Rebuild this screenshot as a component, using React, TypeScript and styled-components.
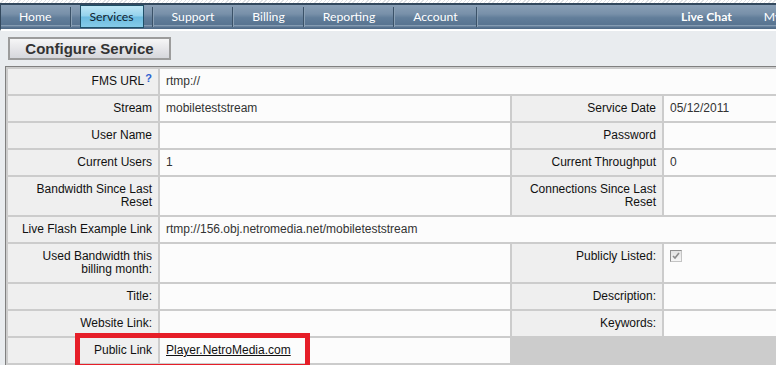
import styled, { createGlobalStyle } from "styled-components";

const GlobalStyle = createGlobalStyle`
  html, body {
    margin: 0;
    padding: 0;
    overflow: hidden;
    background: #e9ecef;
  }
`;

// page frame
const Page = styled.div`
  position: relative;
  width: 844px;
  font-family: "Liberation Sans", Arial, sans-serif;
`;

const TopStrip = styled.div`
  height: 3px;
  background: repeating-linear-gradient(
    135deg,
    #ffffff 0px,
    #ffffff 2px,
    #dfe2e5 2px,
    #dfe2e5 3px
  );
`;

const NavBar = styled.nav`
  display: flex;
  align-items: center;
  height: 25px;
  border: 1px solid #33495e;
  border-right: none;
  background: linear-gradient(
    to bottom,
    #8ba1b7 0%,
    #7890a9 40%,
    #627e9a 55%,
    #587491 82%,
    #849bb1 86%,
    #5a7592 92%,
    #4d6884 100%
  );
  font-family: Lato, "Open Sans", sans-serif;
  font-size: 12.2px;
  border-bottom: 2px solid #ffffff;
  box-shadow: 0 1px 0 #33495e inset;
`;

const NavGroup = styled.div`
  display: flex;
  align-items: center;
  height: 100%;
`;

const RightGroup = styled(NavGroup)`
  margin-left: auto;
`;

const NavItem = styled.a<{ $active?: boolean; $bold?: boolean }>`
  display: flex;
  align-items: center;
  height: 23px;
  box-sizing: border-box;
  margin: 0 8px;
  padding: 0 9px;
  color: ${(p) => (p.$active ? "#10222e" : "#ffffff")};
  font-weight: ${(p) => (p.$bold ? 700 : 400)};
  text-decoration: none;
  white-space: nowrap;
  border: 1px solid ${(p) => (p.$active ? "#1f5068" : "transparent")};
  background: ${(p) =>
    p.$active
      ? "linear-gradient(to bottom, #bde6f5 0%, #94d2ec 48%, #6bbbdf 52%, #86cbe9 100%)"
      : "none"};
`;

const RightItem = styled(NavItem)`
  margin: 0;
  padding: 0 15px;
`;

const Separator = styled.span`
  width: 1px;
  height: 20px;
  background: #3b5268;
  border-right: 1px solid #8aa0b5;
`;

// content
const Content = styled.div`
  padding: 6px 0 0 5px;
`;

const TitleButton = styled.div`
  display: inline-flex;
  align-items: center;
  justify-content: center;
  box-sizing: border-box;
  width: 163px;
  height: 23px;
  margin-left: 3px;
  margin-bottom: 6px;
  border: 2px solid #9c9c9c;
  background: linear-gradient(to bottom, #f6f6f7 0%, #e6e6e9 50%, #d6d7dc 100%);
  color: #333333;
  font-size: 15px;
  font-weight: 700;
`;

const TableWrap = styled.div`
  position: relative;
`;

const InfoTable = styled.table`
  border: 1px solid #808080;
  border-spacing: 2px;
  background: #cccccc;
  font-size: 12px;
  table-layout: fixed;
`;

const Label = styled.td`
  width: 138px;
  padding: 6px 6px 6px;
  line-height: 13px;
  text-align: right;
  vertical-align: top;
  background: #efefef;
  color: #111111;
`;

const Value = styled.td<{ $w?: number }>`
  ${(p) => (p.$w ? `width: ${p.$w}px;` : "")}
  padding: 6px 6px 6px;
  line-height: 13px;
  vertical-align: top;
  background: #fcfcfc;
  color: #333333;
`;

const Blank = styled.td`
  background: transparent;
`;

const Help = styled.span`
  position: relative;
  top: -3px;
  margin-left: 1px;
  color: #2b5fcf;
  font-size: 11px;
  font-weight: 700;
`;

const PublicLink = styled.a`
  color: #111111;
  text-decoration: underline;
`;

const CheckBox = styled.span`
  display: inline-flex;
  align-items: center;
  justify-content: center;
  width: 12px;
  height: 12px;
  box-sizing: border-box;
  border: 1px solid #8f8f8f;
  border-right-color: #c4c4c4;
  border-bottom-color: #c4c4c4;
  background: linear-gradient(to bottom, #e2e2e2, #f6f6f6);
`;

const Highlight = styled.div`
  position: absolute;
  left: 70px;
  top: 267px;
  width: 235px;
  height: 36px;
  box-sizing: border-box;
  border: 5px solid #e61e28;
  pointer-events: none;
`;

const navLeft = ["Home", "Services", "Support", "Billing", "Reporting", "Account"];

export default function App() {
  return (
    <>
      <GlobalStyle />
      <Page>
        <TopStrip />
        <NavBar>
          <NavGroup>
            {navLeft.map((item, i) => (
              <NavGroup key={item}>
                {i > 0 && <Separator />}
                <NavItem $active={item === "Services"}>{item}</NavItem>
              </NavGroup>
            ))}
            <Separator />
          </NavGroup>
          <RightGroup>
            <RightItem $bold>Live Chat</RightItem>
            <RightItem>My Account</RightItem>
          </RightGroup>
        </NavBar>

        <Content>
          <TitleButton>Configure Service</TitleButton>
          <TableWrap>
            <InfoTable>
              <tbody>
                <tr>
                  <Label>
                    FMS URL<Help>?</Help>
                  </Label>
                  <Value colSpan={3}>rtmp://</Value>
                </tr>
                <tr>
                  <Label>Stream</Label>
                  <Value $w={338}>mobileteststream</Value>
                  <Label>Service Date</Label>
                  <Value $w={164}>05/12/2011</Value>
                </tr>
                <tr>
                  <Label>User Name</Label>
                  <Value />
                  <Label>Password</Label>
                  <Value />
                </tr>
                <tr>
                  <Label>Current Users</Label>
                  <Value>1</Value>
                  <Label>Current Throughput</Label>
                  <Value>0</Value>
                </tr>
                <tr>
                  <Label>Bandwidth Since Last Reset</Label>
                  <Value />
                  <Label>Connections Since Last Reset</Label>
                  <Value />
                </tr>
                <tr>
                  <Label>Live Flash Example Link</Label>
                  <Value colSpan={3}>rtmp://156.obj.netromedia.net/mobileteststream</Value>
                </tr>
                <tr>
                  <Label>Used Bandwidth this billing month:</Label>
                  <Value />
                  <Label>Publicly Listed:</Label>
                  <Value>
                    <CheckBox>
                      <svg width="8" height="8" viewBox="0 0 8 8">
                        <polyline
                          points="1,4 3,6 7,1"
                          fill="none"
                          stroke="#8c8c8c"
                          strokeWidth="1.6"
                        />
                      </svg>
                    </CheckBox>
                  </Value>
                </tr>
                <tr>
                  <Label>Title:</Label>
                  <Value />
                  <Label>Description:</Label>
                  <Value />
                </tr>
                <tr>
                  <Label>Website Link:</Label>
                  <Value />
                  <Label>Keywords:</Label>
                  <Value />
                </tr>
                <tr>
                  <Label>Public Link</Label>
                  <Value>
                    <PublicLink>Player.NetroMedia.com</PublicLink>
                  </Value>
                  <Blank colSpan={2} />
                </tr>
              </tbody>
            </InfoTable>
            <Highlight />
          </TableWrap>
        </Content>
      </Page>
    </>
  );
}
